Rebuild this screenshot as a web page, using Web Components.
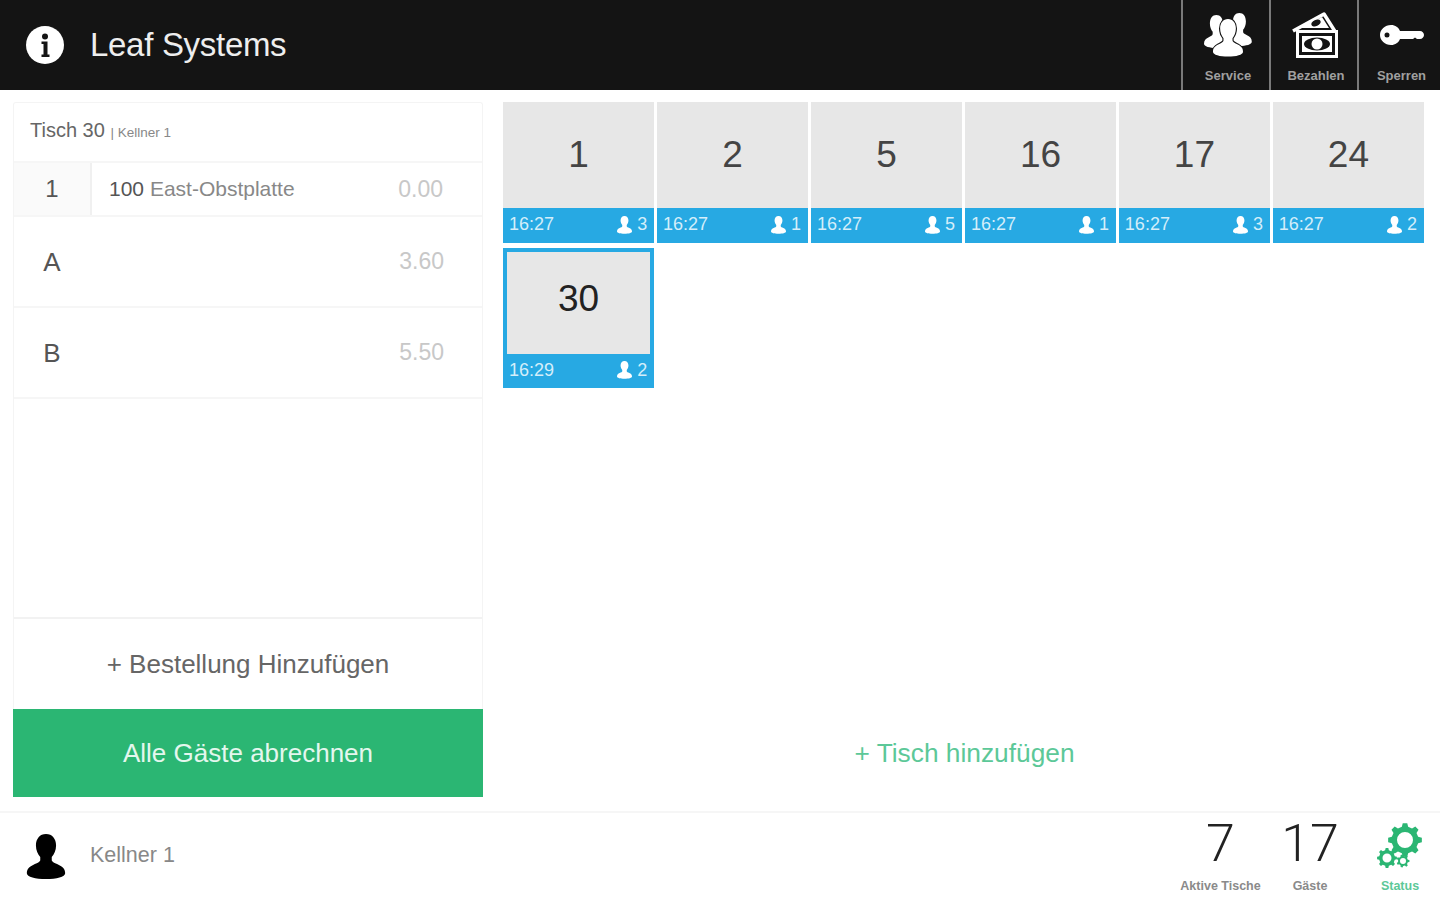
<!DOCTYPE html>
<html lang="de">
<head>
<meta charset="utf-8">
<title>Leaf Systems</title>
<style>
    html, body {
        margin: 0;
        height: 100%;
        background: #fff;
        font-family: "Liberation Sans", Arial, sans-serif;
    }
</style>
</head>
<body>
<pos-app></pos-app>
<script>
const PERSON = "M20 0c6.500 0 10.500 5 10.500 12 0 5-2 9-4.500 12v3c0 2 3 3 7 5 4 2 7 4 7 9 0 4-9 6-20 6S0 45 0 41c0-5 3-7 7-9 4-2 7-3 7-5v-3c-2.500-3-4.500-7-4.500-12C9.500 5 13.500 0 20 0z";

// builds a cog outline, used three times in the status icon
function gearPath(cx, cy, outer, inner, teeth) {
    const pts = [];
    const step = (Math.PI * 2) / teeth;
    for (let i = 0; i < teeth; i++) {
        const a = i * step;
        [[-0.3, inner], [-0.17, outer], [0.17, outer], [0.3, inner]].forEach(([k, r]) => {
            const t = a + k * step;
            pts.push(`${(cx + r * Math.cos(t)).toFixed(2)} ${(cy + r * Math.sin(t)).toFixed(2)}`);
        });
    }
    return `M${pts.join("L")}Z`;
}

function hole(cx, cy, r) {
    return `M${cx} ${cy - r}a${r} ${r} 0 1 0 0 ${r * 2}a${r} ${r} 0 1 0 0 ${-r * 2}z`;
}

const ICONS = {
    info: `<svg width="38" height="38" viewBox="0 0 38 38"><circle cx="19" cy="19" r="19" fill="#fff"/><circle cx="19" cy="10.500" r="3" fill="#141414"/><path d="M15.500 15.500h6v13h2v2.500h-8v-2.500h2v-10.500h-2z" fill="#141414"/></svg>`,
    service: `<svg width="48" height="44" viewBox="0 0 48 44"><g fill="#fff"><path transform="translate(0 2) scale(.62 .7)" d="${PERSON}"/><path transform="translate(23 0) scale(.62 .7)" d="${PERSON}"/><path transform="translate(9 6) scale(.75 .8)" d="${PERSON}" stroke="#141414" stroke-width="3" paint-order="stroke"/></g></svg>`,
    money: `<svg width="50" height="46" viewBox="0 0 50 46"><path d="M2 19 33 2l12 19" fill="none" stroke="#fff" stroke-width="3.500" stroke-linejoin="round"/><path d="M9 16 31 5l7 11z" fill="#fff"/><ellipse cx="25" cy="11" rx="5" ry="3" fill="#141414" transform="rotate(-25 25 11)"/><rect x="6.500" y="19.500" width="39" height="25" fill="#141414" stroke="#fff" stroke-width="3"/><path d="M11 24h30v16H11z" fill="#fff"/><ellipse cx="26" cy="32" rx="13" ry="6.500" fill="#141414"/><circle cx="26" cy="32" r="5.500" fill="#fff"/></svg>`,
    key: `<svg width="44" height="22" viewBox="0 0 44 22"><path fill="#fff" fill-rule="evenodd" d="M11 1c4.300 0 7.700 2.400 9 6h20c2.200 0 4 1.800 4 4s-1.800 4-4 4h-3l-2-1.500-2 1.500h-13c-1.300 3.600-4.700 6-9 6C5 21 0 16.500 0 11S5 1 11 1zM7 8.500a2.500 2.500 0 1 0 0 5 2.500 2.500 0 0 0 0-5z"/></svg>`,
    gear: `<svg width="46" height="46" viewBox="0 0 46 46"><path fill="#2bb673" fill-rule="evenodd" d="${gearPath(28, 17, 17, 13.500, 8)}${hole(28, 17, 8)}"/><path fill="#2bb673" fill-rule="evenodd" d="${gearPath(10, 35, 10, 8, 8)}${hole(10, 35, 4.500)}"/><path fill="#2bb673" fill-rule="evenodd" d="${gearPath(26, 38, 6.500, 5, 7)}${hole(26, 38, 3)}"/></svg>`,
};

class HeaderAction extends HTMLElement {
    connectedCallback() {
        this.attachShadow({ mode: "open" }).innerHTML = `
<style>
    :host {
        display: flex;
        flex-direction: column;
        align-items: center;
        width: 82px;
        padding-left: 4px;
        border-left: 2px solid #7a7a7a;
    }
    :host([narrow]) { width: 77px; }
    .icon {
        height: 66px;
        display: flex;
        align-items: center;
        justify-content: center;
        padding-top: 3px;
        box-sizing: border-box;
    }
    .label {
        font-size: 13px;
        font-weight: bold;
        color: #a0a0a0;
        line-height: 20px;
    }
</style>
<div class="icon">${ICONS[this.getAttribute("icon")]}</div>
<div class="label"><slot></slot></div>`;
    }
}

class PosHeader extends HTMLElement {
    connectedCallback() {
        this.attachShadow({ mode: "open" }).innerHTML = `
<style>
    :host {
        display: flex;
        align-items: stretch;
        height: 90px;
        background: #141414;
        color: #eee;
    }
    .brand {
        flex: 1;
        display: flex;
        align-items: center;
        gap: 26px;
        padding-left: 26px;
    }
    .brand svg { display: block; }
    h1 {
        margin: 0;
        font-size: 33px;
        font-weight: normal;
        letter-spacing: -0.3px;
    }
    .actions { display: flex; }
</style>
<div class="brand">${ICONS.info}<h1>Leaf Systems</h1></div>
<div class="actions">
    <header-action icon="service">Service</header-action>
    <header-action icon="money">Bezahlen</header-action>
    <header-action icon="key" narrow>Sperren</header-action>
</div>`;
    }
}

class OrderRow extends HTMLElement {
    connectedCallback() {
        const tall = this.hasAttribute("seat");
        this.attachShadow({ mode: "open" }).innerHTML = `
<style>
    :host {
        display: flex;
        align-items: ${tall ? "flex-start" : "center"};
        height: ${tall ? 91 : 54}px;
        box-sizing: border-box;
        border-bottom: 2px solid #f6f6f6;
    }
    .seat {
        width: 76px;
        align-self: stretch;
        display: flex;
        align-items: ${tall ? "flex-start" : "center"};
        justify-content: center;
        font-size: ${tall ? 26 : 24}px;
        color: #555;
        ${tall ? "padding-top: 30px; height: 30px;" : "background: #fafafa; border-right: 2px solid #f0f0f0;"}
    }
    .name {
        flex: 1;
        padding-left: 17px;
        font-size: 21px;
        color: #888;
    }
    .price {
        font-size: 23px;
        color: #c8c8c8;
        padding-right: ${tall ? 38 : 39}px;
        ${tall ? "padding-top: 31px;" : ""}
    }
</style>
<div class="seat">${this.getAttribute("label")}</div>
<div class="name"><slot></slot></div>
<div class="price">${this.getAttribute("price")}</div>`;
    }
}

class OrderPanel extends HTMLElement {
    connectedCallback() {
        this.attachShadow({ mode: "open" }).innerHTML = `
<style>
    :host {
        display: flex;
        flex-direction: column;
        width: 470px;
        flex: none;
        box-sizing: border-box;
    }
    .box {
        flex: 1;
        display: flex;
        flex-direction: column;
        border: 1px solid #f4f4f4;
        border-bottom: 0;
        border-radius: 3px 3px 0 0;
    }
    .title {
        height: 60px;
        box-sizing: border-box;
        padding: 16px 0 0 16px;
        font-size: 20px;
        color: #666;
        border-bottom: 2px solid #f6f6f6;
    }
    .title small { font-size: 13.500px; color: #888; }
    .lines {
        flex: 1;
        border-bottom: 2px solid #f2f2f2;
    }
    .add {
        height: 90px;
        display: flex;
        align-items: center;
        justify-content: center;
        font-size: 26px;
        color: #666;
    }
    .pay {
        height: 88px;
        display: flex;
        align-items: center;
        justify-content: center;
        background: #2bb673;
        color: #e4f7ee;
        font-size: 26px;
    }
</style>
<div class="box">
    <div class="title">Tisch 30 <small>| Kellner 1</small></div>
    <div class="lines"><slot></slot></div>
    <div class="add">+ Bestellung Hinzufügen</div>
</div>
<div class="pay">Alle Gäste abrechnen</div>`;
    }
}

class TableTile extends HTMLElement {
    connectedCallback() {
        const active = this.hasAttribute("active");
        this.attachShadow({ mode: "open" }).innerHTML = `
<style>
    :host {
        display: flex;
        flex-direction: column;
        height: ${active ? 140 : 141}px;
        box-sizing: border-box;
        ${active ? "border: 4px solid #27a9e3; border-bottom: 0;" : ""}
    }
    .num {
        flex: 1;
        display: flex;
        align-items: center;
        justify-content: center;
        background: #e7e7e7;
        font-size: 37px;
        color: ${active ? "#222" : "#444"};
        ${active ? "padding-bottom: 8px;" : ""}
    }
    .bar {
        height: ${active ? 34 : 35}px;
        flex: none;
        box-sizing: border-box;
        display: flex;
        align-items: center;
        background: #27a9e3;
        color: #d4eefa;
        font-size: 18px;
        padding: 0 7px 2px 6px;
        margin: 0 ${active ? "-4px" : "0"};
    }
    .time { flex: 1; }
    svg { display: block; margin-right: 4px; }
</style>
<div class="num">${this.getAttribute("num")}</div>
<div class="bar">
    <span class="time">${this.getAttribute("time")}</span>
    <svg width="17" height="18" viewBox="0 0 40 48"><path fill="#fff" d="${PERSON}"/></svg>
    <span>${this.getAttribute("guests")}</span>
</div>`;
    }
}

class TableFloor extends HTMLElement {
    connectedCallback() {
        this.attachShadow({ mode: "open" }).innerHTML = `
<style>
    :host {
        flex: 1;
        display: flex;
        flex-direction: column;
    }
    .grid {
        flex: 1;
        display: grid;
        grid-template-columns: repeat(6, 1fr);
        grid-auto-rows: min-content;
        column-gap: 2.800px;
        row-gap: 5px;
    }
    .add {
        height: 88px;
        display: flex;
        align-items: center;
        justify-content: center;
        font-size: 26.300px;
        color: #5cc898;
        padding: 1px 0 0 2px;
        box-sizing: border-box;
    }
</style>
<div class="grid"><slot></slot></div>
<div class="add">+ Tisch hinzufügen</div>`;
    }
}

class StatItem extends HTMLElement {
    connectedCallback() {
        const icon = this.getAttribute("icon");
        this.attachShadow({ mode: "open" }).innerHTML = `
<style>
    :host {
        display: flex;
        flex-direction: column;
        align-items: center;
        box-sizing: border-box;
        width: 90px;
    }
    :host([first]) { width: 89px; }
    :host([icon]) { width: 85px; padding-left: 5px; }
    .value {
        height: 58px;
        display: flex;
        align-items: center;
        font-family: Roboto, "Liberation Sans", sans-serif;
        font-weight: 300;
        font-size: 52px;
        color: #222;
    }
    .value svg { display: block; margin-top: 6px; }
    .label {
        margin-top: 4px;
        font-size: 12.500px;
        font-weight: bold;
        color: #8a8a8a;
        line-height: 20px;
        ${icon ? "color: #5cc898;" : ""}
    }
</style>
<div class="value">${icon ? ICONS[icon] : this.getAttribute("value")}</div>
<div class="label"><slot></slot></div>`;
    }
}

class PosFooter extends HTMLElement {
    connectedCallback() {
        this.attachShadow({ mode: "open" }).innerHTML = `
<style>
    :host {
        display: flex;
        align-items: center;
        height: 89px;
        box-sizing: border-box;
        border-top: 2px solid #f6f6f6;
        padding-left: 26px;
    }
    .user {
        flex: 1;
        display: flex;
        align-items: center;
        gap: 24px;
        font-size: 21.500px;
        color: #888;
    }
    .user span { margin-top: -2px; }
    svg { display: block; }
    .stats { display: flex; margin-top: -3px; }
</style>
<div class="user">
    <svg width="40" height="46" viewBox="0 0 40 48"><path fill="#000" d="${PERSON}"/></svg>
    <span>Kellner 1</span>
</div>
<div class="stats">
    <stat-item first value="7">Aktive Tische</stat-item>
    <stat-item value="17">Gäste</stat-item>
    <stat-item icon="gear">Status</stat-item>
</div>`;
    }
}

class PosApp extends HTMLElement {
    connectedCallback() {
        this.attachShadow({ mode: "open" }).innerHTML = `
<style>
    :host {
        display: flex;
        flex-direction: column;
        height: 900px;
        overflow: hidden;
    }
    main {
        flex: 1;
        display: flex;
        gap: 20px;
        padding: 12px 16px 14px 13px;
        min-height: 0;
    }
    order-row b {
        font-weight: normal;
        color: #555;
    }
</style>
<pos-header></pos-header>
<main>
    <order-panel>
        <order-row label="1" price="0.00"><b>100</b> East-Obstplatte</order-row>
        <order-row seat label="A" price="3.60"></order-row>
        <order-row seat label="B" price="5.50"></order-row>
    </order-panel>
    <table-floor>
        <table-tile num="1" time="16:27" guests="3"></table-tile>
        <table-tile num="2" time="16:27" guests="1"></table-tile>
        <table-tile num="5" time="16:27" guests="5"></table-tile>
        <table-tile num="16" time="16:27" guests="1"></table-tile>
        <table-tile num="17" time="16:27" guests="3"></table-tile>
        <table-tile num="24" time="16:27" guests="2"></table-tile>
        <table-tile active num="30" time="16:29" guests="2"></table-tile>
    </table-floor>
</main>
<pos-footer></pos-footer>`;
    }
}

customElements.define("header-action", HeaderAction);
customElements.define("pos-header", PosHeader);
customElements.define("order-row", OrderRow);
customElements.define("order-panel", OrderPanel);
customElements.define("table-tile", TableTile);
customElements.define("table-floor", TableFloor);
customElements.define("stat-item", StatItem);
customElements.define("pos-footer", PosFooter);
customElements.define("pos-app", PosApp);
</script>
</body>
</html>
